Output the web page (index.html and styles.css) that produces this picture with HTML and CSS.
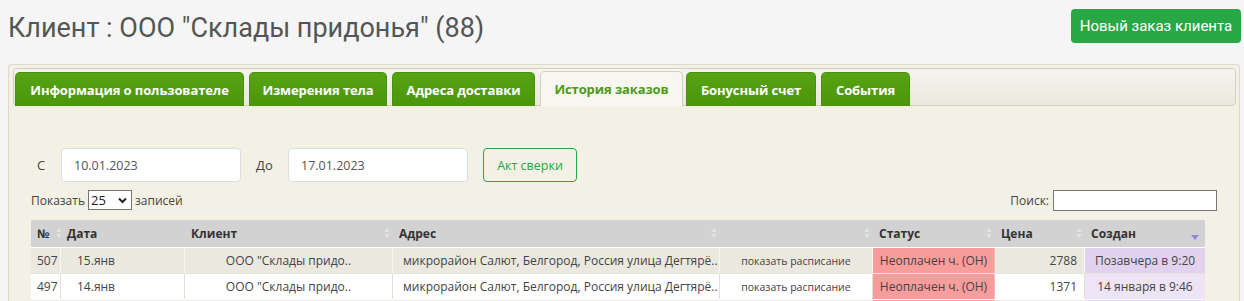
FILE: index.html
```html
<!DOCTYPE html>
<html lang="ru">
<head>
<meta charset="utf-8">
<title>Клиент</title>
<link rel="stylesheet" href="styles.css">
</head>
<body>
<div class="header">
  <h1 class="title">Клиент : ООО "Склады придонья" (88)</h1>
  <button class="btn-new">Новый заказ клиента</button>
</div>
<div class="panel">
  <div class="tabbar">
    <a class="tab">Информация о пользователе</a>
    <a class="tab">Измерения тела</a>
    <a class="tab">Адреса доставки</a>
    <a class="tab active">История заказов</a>
    <a class="tab">Бонусный счет</a>
    <a class="tab">События</a>
  </div>
  <div class="content">
    <div class="daterow">
      <span class="lbl lbl-from">С</span>
      <input class="date" type="text" value="10.01.2023">
      <span class="lbl lbl-to">До</span>
      <input class="date" type="text" value="17.01.2023">
      <button class="btn-akt">Акт сверки</button>
    </div>
    <div class="tools">
      <div class="length"><span>Показать</span><span class="sel">25 <svg width="9" height="7" viewBox="0 0 9 7"><path d="M1 1.5 L4.5 5 L8 1.5" fill="none" stroke="#222" stroke-width="2"/></svg></span><span>записей</span></div>
      <div class="search">Поиск: <span class="search-input"></span></div>
    </div>
    <div class="table">
      <div class="row head">
        <div class="c c1">№<i class="sort s-no"></i></div>
        <div class="c c2">Дата</div>
        <div class="c c3">Клиент<i class="sort"></i></div>
        <div class="c c4">Адрес<i class="sort"></i></div>
        <div class="c c5"><i class="sort"></i></div>
        <div class="c c6">Статус<i class="sort"></i></div>
        <div class="c c7">Цена<i class="sort"></i></div>
        <div class="c c8">Создан<i class="sort-desc"></i></div>
      </div>
      <div class="row odd">
        <div class="c c1">507</div>
        <div class="c c2">15.янв</div>
        <div class="c c3">ООО "Склады придо..</div>
        <div class="c c4">микрорайон Салют, Белгород, Россия улица Дегтярё..</div>
        <div class="c c5">показать расписание</div>
        <div class="c c6">Неоплачен ч. (ОН)</div>
        <div class="c c7">2788</div>
        <div class="c c8">Позавчера в 9:20</div>
      </div>
      <div class="row even">
        <div class="c c1">497</div>
        <div class="c c2">14.янв</div>
        <div class="c c3">ООО "Склады придо..</div>
        <div class="c c4">микрорайон Салют, Белгород, Россия улица Дегтярё..</div>
        <div class="c c5">показать расписание</div>
        <div class="c c6">Неоплачен ч. (ОН)</div>
        <div class="c c7">1371</div>
        <div class="c c8">14 января в 9:46</div>
      </div>
      <div class="row odd">
        <div class="c c1"></div>
        <div class="c c2"></div>
        <div class="c c3"></div>
        <div class="c c4"></div>
        <div class="c c5"></div>
        <div class="c c6"></div>
        <div class="c c7"></div>
        <div class="c c8"></div>
      </div>
    </div>
  </div>
</div>
</body>
</html>
```
FILE: styles.css
```css
* { box-sizing: border-box; }
html, body { margin: 0; padding: 0; }
body {
  background: #f5f5f5;
  font-family: "Open Sans", "Noto Sans", sans-serif;
  color: #444;
  width: 1244px;
  height: 301px;
  overflow: hidden;
}
.header {
  display: flex;
  justify-content: space-between;
  align-items: flex-start;
  padding: 9px 3px 0 8px;
  height: 64px;
}
.title {
  margin: 0;
  margin-top: 2px;
  font-family: Roboto, "Liberation Sans", sans-serif;
  font-weight: 400;
  font-size: 27px;
  line-height: 34px;
  color: #555;
}
.btn-new {
  width: 170px;
  height: 34px;
  border: none;
  border-radius: 4px;
  background: #28a745;
  color: #fff;
  font-family: Roboto, "Liberation Sans", sans-serif;
  font-size: 15px;
  padding: 0;
}
.panel {
  margin: 0 4px 0 8px;
  border: 1px solid #ddd9cb;
  border-bottom: none;
  border-radius: 4px 4px 0 0;
  background: #f3f1e6;
  padding: 3px 3px 0 4px;
  height: 237px;
  overflow: hidden;
}
.tabbar {
  display: flex;
  align-items: flex-end;
  height: 38px;
  border: 1px solid #d3d0c2;
  border-radius: 4px;
  background: linear-gradient(#f6f4ee, #ebe8de);
  padding: 3px 0 0 1px;
}
.tab {
  display: flex;
  align-items: center;
  justify-content: center;
  height: 34px;
  margin-bottom: -1px;
  margin-right: 5px;
  border: 1px solid #4a8e12;
  border-bottom: none;
  border-radius: 5px 5px 0 0;
  background: linear-gradient(#56a313, #4b960b);
  color: #fff;
  font-weight: 700;
  font-size: 13px;
  letter-spacing: -0.1px;
}
.tab:nth-child(1) { width: 229px; }
.tab:nth-child(2) { width: 138px; }
.tab:nth-child(3) { width: 143px; }
.tab:nth-child(4) { width: 143px; margin-right: 3px; }
.tab:nth-child(5) { width: 130px; }
.tab:nth-child(6) { width: 89px; }
.tab.active {
  background: #f7f6f0;
  border-color: #d3d0c2;
  color: #4c9a16;
  height: 35px;
}
.content {
  padding: 0 0 0 18px;
}
.daterow {
  display: flex;
  align-items: center;
  margin-top: 42px;
  padding-left: 6px;
  height: 34px;
  font-size: 13px;
}
.lbl { color: #444; }
.lbl-from { width: 24px; }
.lbl-to { width: 32px; margin-left: 15px; }
.date {
  width: 180px;
  height: 34px;
  border: 1px solid #d9dde2;
  border-radius: 4px;
  background: #fff;
  padding: 0 0 0 12px;
  font-family: "Open Sans", "Noto Sans", sans-serif;
  font-size: 12.5px;
  color: #555;
  outline: none;
}
.btn-akt {
  margin-left: 15px;
  width: 94px;
  height: 34px;
  border: 1px solid #28a745;
  border-radius: 4px;
  background: transparent;
  color: #28a745;
  font-family: "Open Sans", "Noto Sans", sans-serif;
  font-size: 12.5px;
  padding: 0;
}
.tools {
  display: flex;
  justify-content: space-between;
  align-items: center;
  width: 1186px;
  margin-top: 8px;
  height: 20px;
  font-size: 12px;
  color: #444;
}
.length {
  display: flex;
  align-items: center;
  gap: 3px;
}
.sel {
  display: inline-flex;
  align-items: center;
  justify-content: space-between;
  width: 44px;
  height: 20px;
  border: 1px solid #767676;
  background: #fff;
  padding: 0 4px 0 2px;
  font-size: 13px;
  color: #222;
}
.search { display: flex; align-items: center; }
.search-input {
  display: inline-block;
  width: 164px;
  height: 21px;
  border: 1px solid #767676;
  background: #fff;
  margin-left: 4px;
}
.table {
  margin-top: 10px;
  width: 1174px;
  font-size: 12px;
}
.row {
  display: grid;
  grid-template-columns: 30px 124px 208px 327px 153px 122px 90px 120px;
  height: 26px;
}
.c {
  display: flex;
  align-items: center;
  position: relative;
  white-space: nowrap;
  overflow: hidden;
  border-right: 1px solid #e2e0d6;
}
.c:last-child { border-right: none; }
.head { background: #d2d2d2; height: 27px; }
.head .c {
  font-weight: 700;
  color: #333;
  padding-left: 6px;
  border-right: none;
}
.odd { background: #ebe9df; border-top: 1px solid #fff; }
.even { background: #fff; border-top: 1px solid #e6e4da; }
.odd .c { border-right-color: #f7f6f0; }
.row:not(.head) .c1 { padding-left: 6px; }
.row:not(.head) .c2 { padding-left: 16px; }
.row:not(.head) .c3 { justify-content: center; }
.row:not(.head) .c4 { padding-left: 10px; }
.row:not(.head) .c5 { justify-content: center; font-size: 10.5px; }
.row:not(.head) .c6 { justify-content: center; background: #f99c9c; border-right-color: #f5b9b9; }
.row:not(.head) .c7 { justify-content: flex-end; padding-right: 7px; }
.row:not(.head) .c8 { justify-content: center; }
.odd .c8 { background: #e1d3f0; }
.even .c8 { background: #ede4f6; }
.sort {
  position: absolute;
  right: 6px;
  top: 8px;
  width: 0;
  height: 0;
}
.sort::before, .sort::after {
  content: "";
  position: absolute;
  left: -3px;
  border-left: 3px solid transparent;
  border-right: 3px solid transparent;
}
.sort::before { top: 0; border-bottom: 4px solid #e2e2e2; }
.sort::after { top: 6px; border-top: 4px solid #e2e2e2; }
.s-no { right: 2px; }
.sort-desc {
  position: absolute;
  right: 6px;
  top: 15px;
  border-left: 4px solid transparent;
  border-right: 4px solid transparent;
  border-top: 5px solid #8a8bd6;
}
```
